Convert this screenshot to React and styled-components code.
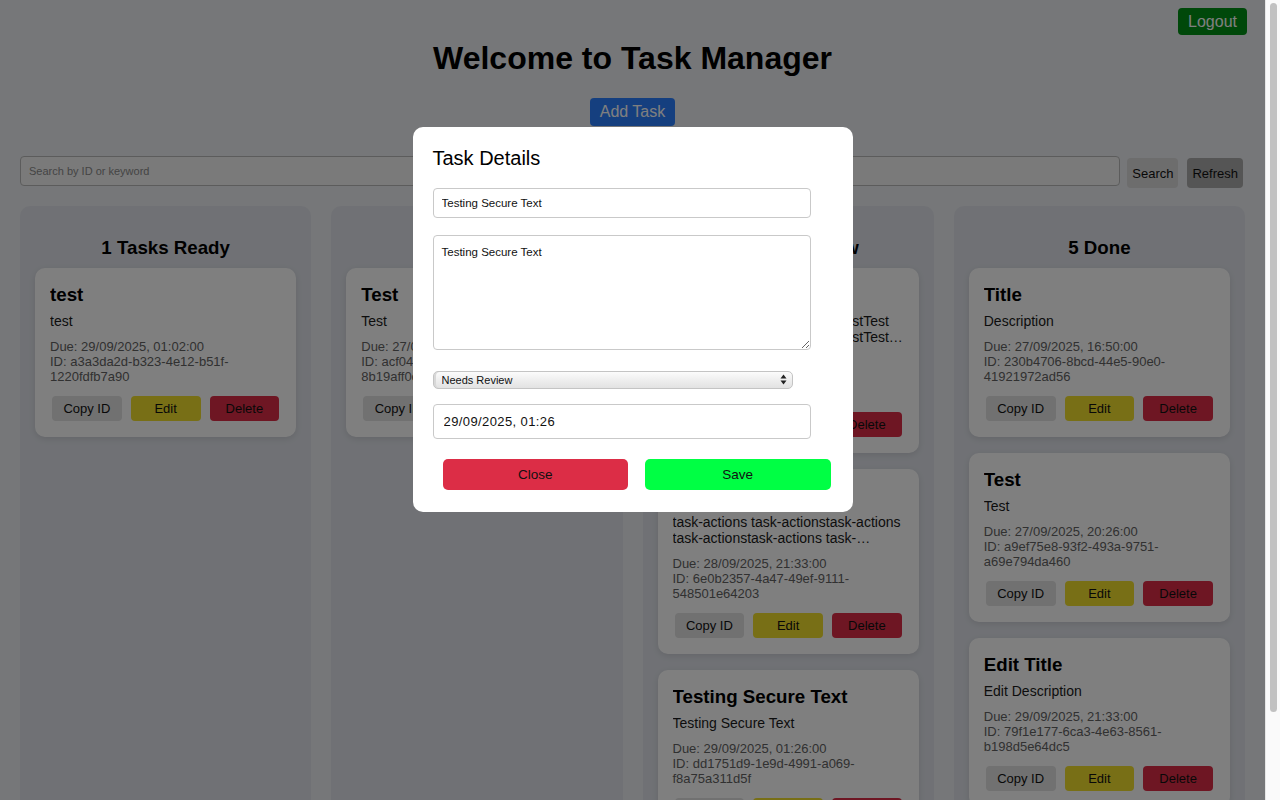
import React, { useState } from 'react'
import styled, { createGlobalStyle } from 'styled-components'

const GlobalStyle = createGlobalStyle`
  html, body {
    margin: 0;
    padding: 0;
    background: #eceef2;
    font-family: "Liberation Sans", Arial, Helvetica, sans-serif;
  }
  * { box-sizing: border-box; }
`

const tasks = {
  ready: [
    { title: 'test', desc: 'test', due: '29/09/2025, 01:02:00', id: 'a3a3da2d-b323-4e12-b51f-1220fdfb7a90' },
  ],
  progress: [
    { title: 'Test', desc: 'Test', due: '27/09/2025, 18:40:00', id: 'acf04b12-7d3e-4c9a-9e21-8b19aff0c3d7' },
  ],
  review: [
    { title: 'Test', desc: 'Test Test Test TestTestTestTestTest TestTest TestTest TestTest TestTest TestTest TestTest', due: '28/09/2025, 10:15:00', id: '5c1d09aa-2b7e-4f10-8d3c-0e6a71b2c9f4' },
    { title: 'task-actions', desc: 'task-actions task-actionstask-actions task-actionstask-actions task-actionstask-actions task-actions', due: '28/09/2025, 21:33:00', id: '6e0b2357-4a47-49ef-9111-548501e64203' },
    { title: 'Testing Secure Text', desc: 'Testing Secure Text', due: '29/09/2025, 01:26:00', id: 'dd1751d9-1e9d-4991-a069-f8a75a311d5f' },
  ],
  done: [
    { title: 'Title', desc: 'Description', due: '27/09/2025, 16:50:00', id: '230b4706-8bcd-44e5-90e0-41921972ad56' },
    { title: 'Test', desc: 'Test', due: '27/09/2025, 20:26:00', id: 'a9ef75e8-93f2-493a-9751-a69e794da460' },
    { title: 'Edit Title', desc: 'Edit Description', due: '29/09/2025, 21:33:00', id: '79f1e177-6ca3-4e63-8561-b198d5e64dc5' },
    { title: 'Done', desc: 'Done', due: '26/09/2025, 09:00:00', id: 'b31c77e2-0f4a-4d8e-a1b2-6c5d4e3f2a10' },
    { title: 'Test', desc: 'Test', due: '25/09/2025, 12:00:00', id: 'c42d88f3-1a5b-4e9f-b2c3-7d6e5f4a3b21' },
  ],
}

const columns = [
  { key: 'ready', label: 'Tasks Ready' },
  { key: 'progress', label: 'In Progress' },
  { key: 'review', label: 'Needs Review' },
  { key: 'done', label: 'Done' },
]

const btnColors = {
  copy: '#e2e2e2',
  edit: '#f0de2c',
  delete: '#dc2d46',
}

const Page = styled.div`
  margin-right: 15px;
  padding: 0 20px 20px;
`

const TopBar = styled.div`
  display: flex;
  justify-content: flex-end;
  padding-top: 8px;
  margin-right: -2px;
`

const LogoutButton = styled.button`
  height: 27px;
  padding: 0 10px;
  border: none;
  border-radius: 4px;
  background: #009014;
  color: #fff;
  font-family: inherit;
  font-size: 16px;
`

const Title = styled.h1`
  margin: 5px 0 21px;
  text-align: center;
  font-size: 32px;
  line-height: 37px;
  font-weight: bold;
`

const AddRow = styled.div`
  display: flex;
  justify-content: center;
`

const AddButton = styled.button`
  height: 28px;
  padding: 0 10px;
  border: none;
  border-radius: 4px;
  background: #2a7fff;
  color: #fff;
  font-family: inherit;
  font-size: 16px;
`

const SearchRow = styled.div`
  display: flex;
  align-items: flex-start;
  margin-top: 30px;
  padding-right: 2px;
`

const SearchInput = styled.input`
  flex: 1;
  height: 30px;
  padding: 0 8px;
  border: 1px solid #b9b9b9;
  border-radius: 4px;
  background: #f4f4f4;
  font-family: inherit;
  font-size: 11px;
  &::placeholder { color: #8a8a8a; }
`

const SmallButton = styled.button`
  height: 30px;
  margin: 2px 0 0 ${p => p.$gap}px;
  padding: 0 5px;
  border: none;
  border-radius: 4px;
  background: ${p => p.$bg};
  color: #111;
  font-family: inherit;
  font-size: 13px;
`

const Board = styled.div`
  display: grid;
  grid-template-columns: repeat(4, 1fr);
  gap: 20px;
  margin-top: 18px;
`

const Column = styled.div`
  height: 676px;
  overflow: hidden;
  padding: 15px;
  border-radius: 10px;
  background: #e0e3ea;
`

const ColumnTitle = styled.h3`
  margin: 16px 0 10px;
  text-align: center;
  font-size: 18.72px;
  line-height: 21px;
`

const CardList = styled.div`
  display: flex;
  flex-direction: column;
  gap: 16px;
`

const Card = styled.div`
  padding: 16px 15px;
  border-radius: 10px;
  background: #fff;
  box-shadow: 0 2px 6px rgba(0, 0, 0, 0.1);
`

const CardTitle = styled.h3`
  margin: 0 0 7px;
  font-size: 18.72px;
  line-height: 22px;
  overflow: hidden;
  white-space: nowrap;
  text-overflow: ellipsis;
`

const CardDesc = styled.p`
  margin: 0 0 10px;
  font-size: 14px;
  line-height: 16px;
  color: #1a1a1a;
  display: -webkit-box;
  -webkit-line-clamp: 2;
  -webkit-box-orient: vertical;
  overflow: hidden;
`

const CardMeta = styled.div`
  font-size: 13px;
  line-height: 15px;
  color: #626262;
`

const Actions = styled.div`
  display: flex;
  gap: 9px;
  margin-top: 12px;
  padding: 0 2px;
`

const ActionButton = styled.button`
  flex: 1;
  height: 25px;
  border: none;
  border-radius: 4px;
  background: ${p => btnColors[p.$kind]};
  color: #111;
  font-family: inherit;
  font-size: 13px;
`

const ScrollTrack = styled.div`
  position: fixed;
  top: 0;
  right: 0;
  bottom: 0;
  width: 15px;
  padding: 3px 3px 0 4px;
  background: #fafafa;
  border-left: 1px solid #e6e6e6;
`

const ScrollThumb = styled.div`
  height: 709px;
  border-radius: 4px;
  background: #c1c1c1;
`

const Overlay = styled.div`
  position: fixed;
  top: 0;
  left: 0;
  bottom: 0;
  right: 15px;
  display: flex;
  justify-content: center;
  align-items: flex-start;
  padding-top: 127px;
  background: rgba(0, 0, 0, 0.5);
`

const Modal = styled.div`
  width: 440px;
  padding: 20px 20px 22px;
  border-radius: 10px;
  background: #fff;
  display: flex;
  flex-direction: column;
  align-items: flex-start;
`

const ModalTitle = styled.h2`
  margin: 0 0 18px;
  font-size: 20px;
  line-height: 23px;
  font-weight: normal;
`

const Field = styled.input`
  width: 378px;
  height: ${p => p.$h}px;
  margin-bottom: ${p => p.$mb}px;
  padding: 0 ${p => p.$px}px;
  border: 1px solid #c9c9c9;
  border-radius: 4px;
  background: #fff;
  color: #111;
  font-family: inherit;
  font-size: ${p => p.$fs}px;
  letter-spacing: ${p => p.$ls || 0}px;
`

const TextArea = styled.textarea`
  display: block;
  width: 378px;
  height: 115px;
  margin-bottom: 20px;
  padding: 9px 8px;
  border: 1px solid #c9c9c9;
  border-radius: 4px;
  color: #111;
  font-family: inherit;
  font-size: 11.5px;
  line-height: 14px;
`

const SelectWrap = styled.div`
  position: relative;
  width: 360px;
  height: 18px;
  margin-bottom: 16px;
`

const Select = styled.select`
  appearance: none;
  width: 100%;
  height: 18px;
  padding: 0 8px;
  border: 1px solid #c4c4c4;
  border-radius: 5px;
  background: linear-gradient(#fbfbfb, #e2e2e2);
  box-shadow: inset 2px 0 0 #d8d8d8;
  color: #111;
  font-family: inherit;
  font-size: 11px;
`

const Arrows = styled.svg`
  position: absolute;
  right: 6px;
  top: 4px;
  pointer-events: none;
`

const ButtonRow = styled.div`
  display: flex;
  gap: 17px;
  width: 100%;
  padding: 0 2px 0 10px;
`

const ModalButton = styled.button`
  flex: 1;
  height: 31px;
  border: none;
  border-radius: 5px;
  background: ${p => p.$bg};
  color: #111;
  font-family: inherit;
  font-size: 13.5px;
`

const TaskCard = ({ task }) => (
  <Card>
    <CardTitle>{task.title}</CardTitle>
    <CardDesc>{task.desc}</CardDesc>
    <CardMeta>
      <div>Due: {task.due}</div>
      <div>ID: {task.id}</div>
    </CardMeta>
    <Actions>
      <ActionButton $kind="copy">Copy ID</ActionButton>
      <ActionButton $kind="edit">Edit</ActionButton>
      <ActionButton $kind="delete">Delete</ActionButton>
    </Actions>
  </Card>
)

const App = () => {
  const [title, setTitle] = useState('Testing Secure Text')
  const [desc, setDesc] = useState('Testing Secure Text')
  const [status, setStatus] = useState('review')
  const [due, setDue] = useState('29/09/2025, 01:26')

  return (
    <>
      <GlobalStyle />
      <Page>
        <TopBar>
          <LogoutButton>Logout</LogoutButton>
        </TopBar>
        <Title>Welcome to Task Manager</Title>
        <AddRow>
          <AddButton>Add Task</AddButton>
        </AddRow>
        <SearchRow>
          <SearchInput placeholder="Search by ID or keyword" />
          <SmallButton $gap={7} $bg="#dadada">Search</SmallButton>
          <SmallButton $gap={9} $bg="#aaaaaa">Refresh</SmallButton>
        </SearchRow>
        <Board>
          {columns.map(col => (
            <Column key={col.key}>
              <ColumnTitle>{tasks[col.key].length} {col.label}</ColumnTitle>
              <CardList>
                {tasks[col.key].map(t => <TaskCard key={t.id} task={t} />)}
              </CardList>
            </Column>
          ))}
        </Board>
      </Page>

      <ScrollTrack>
        <ScrollThumb />
      </ScrollTrack>

      <Overlay>
        <Modal>
          <ModalTitle>Task Details</ModalTitle>
          <Field $h={30} $mb={17} $px={8} $fs={11.5} value={title} onChange={e => setTitle(e.target.value)} />
          <TextArea value={desc} onChange={e => setDesc(e.target.value)} />
          <SelectWrap>
            <Select value={status} onChange={e => setStatus(e.target.value)}>
              <option value="ready">Ready</option>
              <option value="progress">In Progress</option>
              <option value="review">Needs Review</option>
              <option value="done">Done</option>
            </Select>
            <Arrows width="7" height="11" viewBox="0 0 7 11">
              <path d="M3.5 0.5 L6.5 4.5 H0.5 Z" fill="#222" />
              <path d="M3.5 10.5 L6.5 6.5 H0.5 Z" fill="#222" />
            </Arrows>
          </SelectWrap>
          <Field $h={35} $mb={20} $px={10} $fs={13} $ls={0.4} value={due} onChange={e => setDue(e.target.value)} />
          <ButtonRow>
            <ModalButton $bg="#dc2d46">Close</ModalButton>
            <ModalButton $bg="#00ff44">Save</ModalButton>
          </ButtonRow>
        </Modal>
      </Overlay>
    </>
  )
}

export default App
